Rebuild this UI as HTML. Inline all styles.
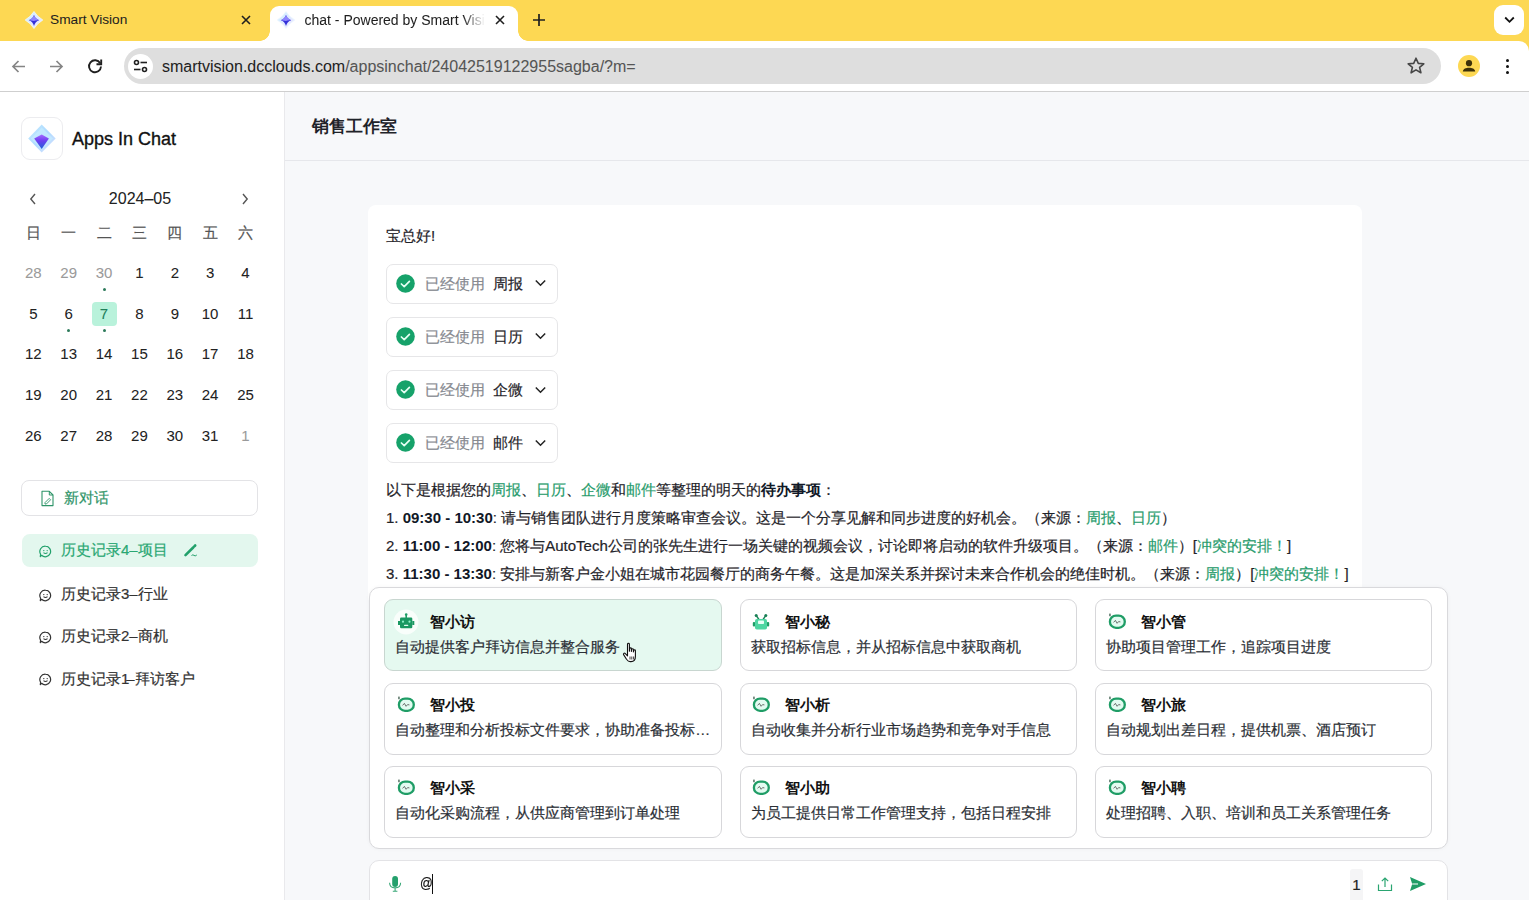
<!DOCTYPE html>
<html><head><meta charset="utf-8">
<style>
*{box-sizing:border-box;margin:0;padding:0}
html,body{width:1529px;height:900px;overflow:hidden;background:#fff;font-family:"Liberation Sans",sans-serif;color:#1f2329;-webkit-text-stroke-width:0.2px}
.abs{position:absolute}
#tabbar,#toolbar{-webkit-text-stroke-width:0.05px}
.cd{-webkit-text-stroke-width:0.05px}
b{-webkit-text-stroke-width:0}
#tabbar{position:absolute;left:0;top:0;width:1529px;height:60px;background:#FDD853}
#toolbar{position:absolute;left:0;top:41px;width:1529px;height:51px;background:#fff;border-top-right-radius:10px}
#tbline{position:absolute;left:0;top:91px;width:1529px;height:1px;background:#cfcfcf;z-index:5}
.tabtxt{position:absolute;top:12px;font-size:13.7px;color:#1f1f1f;white-space:nowrap;line-height:16px}
#sidebar{position:absolute;left:0;top:91px;width:284px;height:809px;background:#fff}
#sbline{position:absolute;left:284px;top:91px;width:1px;height:809px;background:#e9e9ec}
#main{position:absolute;left:285px;top:91px;width:1244px;height:809px;background:#F7F8FA}
</style></head><body>

<!-- ============ TAB BAR ============ -->
<div id="tabbar">
  <!-- tab 1 -->
  <svg class="abs" style="left:22.5px;top:9.5px" width="22" height="20" viewBox="0 0 22 20">
    <defs><linearGradient id="fg1" x1="0" y1="0" x2="1" y2="1"><stop offset="0" stop-color="#c8f4ff"/><stop offset="0.5" stop-color="#dfeaff"/><stop offset="1" stop-color="#efe9ff"/></linearGradient></defs>
    <path d="M11 1.5 Q14 6.5 19.8 10 Q14 13.5 11 18.5 Q8 13.5 2.2 10 Q8 6.5 11 1.5Z" stroke="#eef6ff" stroke-width="0.8" fill="url(#fg1)"/>
    <path d="M11 5 Q12.3 8.8 16.2 10.2 Q12.3 11.4 11 16 Q9.7 11.4 5.8 10.2 Q9.7 8.8 11 5Z" fill="#3431d8"/>
    <path d="M5.8 10.2 Q9.7 8.8 11 5 Q12.3 8.8 16.2 10.2 Q12.5 10 11 11Z" fill="#8f86ff"/>
  </svg>
  <div class="tabtxt" style="left:50px">Smart Vision</div>
  <svg class="abs" style="left:240px;top:14px" width="12" height="12" viewBox="0 0 12 12"><path d="M2 2L10 10M10 2L2 10" stroke="#1f1f1f" stroke-width="1.6"/></svg>

  <!-- active tab -->
  <div class="abs" style="left:270px;top:6px;width:248px;height:40px;background:#fff;border-radius:9px 9px 0 0"></div>
  <div class="abs" style="left:260px;top:31px;width:10px;height:10px;background:radial-gradient(circle at 0 0,#FDD853 9.5px,#fff 10px)"></div>
  <div class="abs" style="left:518px;top:31px;width:10px;height:10px;background:radial-gradient(circle at 100% 0,#FDD853 9.5px,#fff 10px)"></div>
  <svg class="abs" style="left:274.5px;top:9.5px" width="22" height="20" viewBox="0 0 22 20">
    <defs><linearGradient id="fg2" x1="0" y1="0" x2="1" y2="1"><stop offset="0" stop-color="#c8f4ff"/><stop offset="0.5" stop-color="#dfeaff"/><stop offset="1" stop-color="#efe9ff"/></linearGradient></defs>
    <path d="M11 1.5 Q14 6.5 19.8 10 Q14 13.5 11 18.5 Q8 13.5 2.2 10 Q8 6.5 11 1.5Z" stroke="#eef6ff" stroke-width="0.8" fill="url(#fg2)"/>
    <path d="M11 5 Q12.3 8.8 16.2 10.2 Q12.3 11.4 11 16 Q9.7 11.4 5.8 10.2 Q9.7 8.8 11 5Z" fill="#3431d8"/>
    <path d="M5.8 10.2 Q9.7 8.8 11 5 Q12.3 8.8 16.2 10.2 Q12.5 10 11 11Z" fill="#8f86ff"/>
  </svg>
  <div class="tabtxt" style="left:304.5px;width:182px;font-size:14px;overflow:hidden;-webkit-mask-image:linear-gradient(90deg,#000 158px,transparent 180px)">chat - Powered by Smart Vision</div>
  <svg class="abs" style="left:494px;top:14px" width="12" height="12" viewBox="0 0 12 12"><path d="M2 2L10 10M10 2L2 10" stroke="#1f1f1f" stroke-width="1.6"/></svg>
  <svg class="abs" style="left:532px;top:13px" width="14" height="14" viewBox="0 0 14 14"><path d="M7 1V13M1 7H13" stroke="#1f1f1f" stroke-width="1.7"/></svg>
  <!-- dropdown -->
  <div class="abs" style="left:1494px;top:5px;width:30px;height:30px;background:#fff;border-radius:9px"></div>
  <svg class="abs" style="left:1504px;top:16px" width="11" height="8" viewBox="0 0 11 8"><path d="M1.2 1.5L5.5 5.8L9.8 1.5" fill="none" stroke="#111" stroke-width="1.8"/></svg>
</div>

<!-- ============ TOOLBAR ============ -->
<div id="toolbar">
  <svg class="abs" style="left:10px;top:17px" width="17" height="17" viewBox="0 0 17 17"><path d="M15 8.5H3M8.5 3L3 8.5L8.5 14" fill="none" stroke="#858585" stroke-width="1.7"/></svg>
  <svg class="abs" style="left:48px;top:17px" width="17" height="17" viewBox="0 0 17 17"><path d="M2 8.5H14M8.5 3L14 8.5L8.5 14" fill="none" stroke="#858585" stroke-width="1.7"/></svg>
  <svg class="abs" style="left:86px;top:16px" width="18" height="18" viewBox="0 0 18 18"><path d="M14.2 6.2A6 6 0 1 0 15 9.5" fill="none" stroke="#1f1f1f" stroke-width="1.9"/><path d="M15.2 2.5V7.2H10.5" fill="none" stroke="#1f1f1f" stroke-width="1.9"/></svg>
  <div class="abs" style="left:124px;top:7px;width:1317px;height:36px;background:#DEDEDE;border-radius:18px"></div>
  <div class="abs" style="left:128px;top:12.5px;width:25px;height:25px;background:#fff;border-radius:50%"></div>
  <svg class="abs" style="left:132px;top:17px" width="17" height="16" viewBox="0 0 17 16">
    <circle cx="4.5" cy="4.5" r="2" fill="none" stroke="#1f1f1f" stroke-width="1.6"/><path d="M8.5 4.5H15" stroke="#1f1f1f" stroke-width="1.6"/>
    <circle cx="12.5" cy="11.5" r="2" fill="none" stroke="#1f1f1f" stroke-width="1.6"/><path d="M2 11.5H8.5" stroke="#1f1f1f" stroke-width="1.6"/>
  </svg>
  <div class="abs" style="left:162px;top:16px;font-size:16px;line-height:19px;white-space:nowrap;color:#1f1f1f">smartvision.dcclouds.com<span style="color:#555">/appsinchat/24042519122955sagba/?m=</span></div>
  <svg class="abs" style="left:1406px;top:15px" width="20" height="20" viewBox="0 0 20 20"><path d="M10 2.2L12.3 7.4L17.8 7.8L13.6 11.4L14.9 16.8L10 13.9L5.1 16.8L6.4 11.4L2.2 7.8L7.7 7.4Z" fill="none" stroke="#474747" stroke-width="1.6" stroke-linejoin="round"/></svg>
  <div class="abs" style="left:1458px;top:14px;width:22px;height:22px;border-radius:50%;background:#FDD853"></div>
  <svg class="abs" style="left:1458px;top:14px" width="22" height="22" viewBox="0 0 22 22"><circle cx="11" cy="8.2" r="3.1" fill="#3d3108"/><path d="M4.8 16.6C5.3 13.8 8 12.8 11 12.8S16.7 13.8 17.2 16.6Z" fill="#3d3108"/></svg>
  <div class="abs" style="left:1506px;top:17.5px;width:3px;height:3px;border-radius:50%;background:#111"></div>
  <div class="abs" style="left:1506px;top:23.5px;width:3px;height:3px;border-radius:50%;background:#111"></div>
  <div class="abs" style="left:1506px;top:29.5px;width:3px;height:3px;border-radius:50%;background:#111"></div>
</div>
<div id="tbline"></div>

<!-- ============ SIDEBAR ============ -->
<div id="sidebar">
  <!-- logo -->
  <div class="abs" style="left:21px;top:26px;width:42px;height:43px;border:1px solid #ececef;border-radius:9px;background:#fff"></div>
  <svg class="abs" style="left:27px;top:33px" width="30" height="30" viewBox="0 0 30 30">
    <defs>
      <linearGradient id="lg1" x1="0" y1="0" x2="1" y2="1"><stop offset="0" stop-color="#b9e6ff"/><stop offset="0.5" stop-color="#9fd4ff"/><stop offset="1" stop-color="#d6dcff"/></linearGradient>
      <linearGradient id="lg2" x1="0" y1="0" x2="0" y2="1"><stop offset="0" stop-color="#a66bff"/><stop offset="0.45" stop-color="#6b3df0"/><stop offset="1" stop-color="#1f63d8"/></linearGradient>
    </defs>
    <path d="M14.7 0.6L28.7 14.6L14.7 28.4L1.2 14.6Z" fill="url(#lg1)" opacity="0.85"/>
    <path d="M14.7 3.5L26 14.6L14.7 25.5L3.8 14.6Z" fill="#c8ecff" opacity="0.7"/>
    <path d="M14.7 10.4L21.9 14.4L14.7 24.9L7.2 14.4Z" fill="url(#lg2)"/>
  </svg>
  <div class="abs" style="left:72px;top:37px;font-size:18px;line-height:22px;color:#111;-webkit-text-stroke:0.35px #111;white-space:nowrap">Apps In Chat</div>

  <!-- calendar -->
  <svg class="abs" style="left:28px;top:101px" width="10" height="14" viewBox="0 0 10 14"><path d="M7 2L2.8 7L7 12" fill="none" stroke="#555" stroke-width="1.4"/></svg>
  <div class="abs" style="left:90px;top:97.5px;width:100px;text-align:center;font-size:16px;line-height:19px;color:#222;-webkit-text-stroke-width:0.05px">2024–05</div>
  <svg class="abs" style="left:240px;top:101px" width="10" height="14" viewBox="0 0 10 14"><path d="M3 2L7.2 7L3 12" fill="none" stroke="#555" stroke-width="1.4"/></svg>
  <div class="abs" style="left:15.8px;top:132px;width:35px;text-align:center;font-size:15px;line-height:20px;color:#555">日</div>
  <div class="abs" style="left:51.2px;top:132px;width:35px;text-align:center;font-size:15px;line-height:20px;color:#555">一</div>
  <div class="abs" style="left:86.5px;top:132px;width:35px;text-align:center;font-size:15px;line-height:20px;color:#555">二</div>
  <div class="abs" style="left:121.9px;top:132px;width:35px;text-align:center;font-size:15px;line-height:20px;color:#555">三</div>
  <div class="abs" style="left:157.3px;top:132px;width:35px;text-align:center;font-size:15px;line-height:20px;color:#555">四</div>
  <div class="abs" style="left:192.6px;top:132px;width:35px;text-align:center;font-size:15px;line-height:20px;color:#555">五</div>
  <div class="abs" style="left:228.0px;top:132px;width:35px;text-align:center;font-size:15px;line-height:20px;color:#555">六</div>
  <div class="abs" style="left:15.8px;top:172.0px;width:35px;text-align:center;font-size:15px;line-height:20px;color:#9a9a9a;-webkit-text-stroke-width:0.05px">28</div>
  <div class="abs" style="left:51.2px;top:172.0px;width:35px;text-align:center;font-size:15px;line-height:20px;color:#9a9a9a;-webkit-text-stroke-width:0.05px">29</div>
  <div class="abs" style="left:86.5px;top:172.0px;width:35px;text-align:center;font-size:15px;line-height:20px;color:#9a9a9a;-webkit-text-stroke-width:0.05px">30</div>
  <div class="abs" style="left:102.5px;top:197.0px;width:3px;height:3px;border-radius:50%;background:#2d7a5b"></div>
  <div class="abs" style="left:121.9px;top:172.0px;width:35px;text-align:center;font-size:15px;line-height:20px;color:#222;-webkit-text-stroke-width:0.05px">1</div>
  <div class="abs" style="left:157.3px;top:172.0px;width:35px;text-align:center;font-size:15px;line-height:20px;color:#222;-webkit-text-stroke-width:0.05px">2</div>
  <div class="abs" style="left:192.6px;top:172.0px;width:35px;text-align:center;font-size:15px;line-height:20px;color:#222;-webkit-text-stroke-width:0.05px">3</div>
  <div class="abs" style="left:228.0px;top:172.0px;width:35px;text-align:center;font-size:15px;line-height:20px;color:#222;-webkit-text-stroke-width:0.05px">4</div>
  <div class="abs" style="left:15.8px;top:212.5px;width:35px;text-align:center;font-size:15px;line-height:20px;color:#222;-webkit-text-stroke-width:0.05px">5</div>
  <div class="abs" style="left:51.2px;top:212.5px;width:35px;text-align:center;font-size:15px;line-height:20px;color:#222;-webkit-text-stroke-width:0.05px">6</div>
  <div class="abs" style="left:67.2px;top:237.5px;width:3px;height:3px;border-radius:50%;background:#2d7a5b"></div>
  <div class="abs" style="left:91.5px;top:210.5px;width:25px;height:24px;border-radius:4px;background:#B9F2DB"></div>
  <div class="abs" style="left:86.5px;top:212.5px;width:35px;text-align:center;font-size:15px;line-height:20px;color:#21805b;-webkit-text-stroke-width:0.05px">7</div>
  <div class="abs" style="left:102.5px;top:237.5px;width:3px;height:3px;border-radius:50%;background:#2d7a5b"></div>
  <div class="abs" style="left:121.9px;top:212.5px;width:35px;text-align:center;font-size:15px;line-height:20px;color:#222;-webkit-text-stroke-width:0.05px">8</div>
  <div class="abs" style="left:157.3px;top:212.5px;width:35px;text-align:center;font-size:15px;line-height:20px;color:#222;-webkit-text-stroke-width:0.05px">9</div>
  <div class="abs" style="left:192.6px;top:212.5px;width:35px;text-align:center;font-size:15px;line-height:20px;color:#222;-webkit-text-stroke-width:0.05px">10</div>
  <div class="abs" style="left:228.0px;top:212.5px;width:35px;text-align:center;font-size:15px;line-height:20px;color:#222;-webkit-text-stroke-width:0.05px">11</div>
  <div class="abs" style="left:15.8px;top:253.0px;width:35px;text-align:center;font-size:15px;line-height:20px;color:#222;-webkit-text-stroke-width:0.05px">12</div>
  <div class="abs" style="left:51.2px;top:253.0px;width:35px;text-align:center;font-size:15px;line-height:20px;color:#222;-webkit-text-stroke-width:0.05px">13</div>
  <div class="abs" style="left:86.5px;top:253.0px;width:35px;text-align:center;font-size:15px;line-height:20px;color:#222;-webkit-text-stroke-width:0.05px">14</div>
  <div class="abs" style="left:121.9px;top:253.0px;width:35px;text-align:center;font-size:15px;line-height:20px;color:#222;-webkit-text-stroke-width:0.05px">15</div>
  <div class="abs" style="left:157.3px;top:253.0px;width:35px;text-align:center;font-size:15px;line-height:20px;color:#222;-webkit-text-stroke-width:0.05px">16</div>
  <div class="abs" style="left:192.6px;top:253.0px;width:35px;text-align:center;font-size:15px;line-height:20px;color:#222;-webkit-text-stroke-width:0.05px">17</div>
  <div class="abs" style="left:228.0px;top:253.0px;width:35px;text-align:center;font-size:15px;line-height:20px;color:#222;-webkit-text-stroke-width:0.05px">18</div>
  <div class="abs" style="left:15.8px;top:294.0px;width:35px;text-align:center;font-size:15px;line-height:20px;color:#222;-webkit-text-stroke-width:0.05px">19</div>
  <div class="abs" style="left:51.2px;top:294.0px;width:35px;text-align:center;font-size:15px;line-height:20px;color:#222;-webkit-text-stroke-width:0.05px">20</div>
  <div class="abs" style="left:86.5px;top:294.0px;width:35px;text-align:center;font-size:15px;line-height:20px;color:#222;-webkit-text-stroke-width:0.05px">21</div>
  <div class="abs" style="left:121.9px;top:294.0px;width:35px;text-align:center;font-size:15px;line-height:20px;color:#222;-webkit-text-stroke-width:0.05px">22</div>
  <div class="abs" style="left:157.3px;top:294.0px;width:35px;text-align:center;font-size:15px;line-height:20px;color:#222;-webkit-text-stroke-width:0.05px">23</div>
  <div class="abs" style="left:192.6px;top:294.0px;width:35px;text-align:center;font-size:15px;line-height:20px;color:#222;-webkit-text-stroke-width:0.05px">24</div>
  <div class="abs" style="left:228.0px;top:294.0px;width:35px;text-align:center;font-size:15px;line-height:20px;color:#222;-webkit-text-stroke-width:0.05px">25</div>
  <div class="abs" style="left:15.8px;top:334.5px;width:35px;text-align:center;font-size:15px;line-height:20px;color:#222;-webkit-text-stroke-width:0.05px">26</div>
  <div class="abs" style="left:51.2px;top:334.5px;width:35px;text-align:center;font-size:15px;line-height:20px;color:#222;-webkit-text-stroke-width:0.05px">27</div>
  <div class="abs" style="left:86.5px;top:334.5px;width:35px;text-align:center;font-size:15px;line-height:20px;color:#222;-webkit-text-stroke-width:0.05px">28</div>
  <div class="abs" style="left:121.9px;top:334.5px;width:35px;text-align:center;font-size:15px;line-height:20px;color:#222;-webkit-text-stroke-width:0.05px">29</div>
  <div class="abs" style="left:157.3px;top:334.5px;width:35px;text-align:center;font-size:15px;line-height:20px;color:#222;-webkit-text-stroke-width:0.05px">30</div>
  <div class="abs" style="left:192.6px;top:334.5px;width:35px;text-align:center;font-size:15px;line-height:20px;color:#222;-webkit-text-stroke-width:0.05px">31</div>
  <div class="abs" style="left:228.0px;top:334.5px;width:35px;text-align:center;font-size:15px;line-height:20px;color:#9a9a9a;-webkit-text-stroke-width:0.05px">1</div>

  <!-- new chat -->
  <div class="abs" style="left:21px;top:389px;width:237px;height:36px;border:1px solid #e3e3e6;border-radius:8px;background:#fff"></div>
  <svg class="abs" style="left:40px;top:399px" width="15" height="17" viewBox="0 0 15 17"><path d="M2 1.3H9.3L13 5V15.6H2Z" fill="none" stroke="#2e9468" stroke-width="1.1" stroke-linejoin="round"/><path d="M9.3 1.3V5H13" fill="none" stroke="#2e9468" stroke-width="1"/><path d="M5 12.6L9.2 8.4L10.6 9.8L6.4 14H5Z" fill="none" stroke="#2e9468" stroke-width="0.9" stroke-linejoin="round"/></svg>
  <div class="abs" style="left:64px;top:398px;font-size:15px;line-height:18px;color:#2e9468">新对话</div>

  <!-- history -->
  <div class="abs" style="left:22px;top:443px;width:236px;height:33px;border-radius:8px;background:#E3F7EE"></div>
  <div class="abs" style="left:38.5px;top:452.8px;width:13px;height:13px"><svg width="13" height="13" viewBox="0 0 13 13"><path d="M6.5 1.2A5.3 5.3 0 1 1 2.6 10.3L1.3 11.6L1.6 9.2A5.3 5.3 0 0 1 6.5 1.2Z" fill="none" stroke="#22a06b" stroke-width="1.2" stroke-linejoin="round"/><circle cx="4.8" cy="5.6" r="0.7" fill="#22a06b"/><circle cx="8.2" cy="5.6" r="0.7" fill="#22a06b"/><path d="M4.5 7.6Q6.5 9.4 8.5 7.6" fill="none" stroke="#22a06b" stroke-width="1.1"/></svg></div>
  <div class="abs" style="left:61px;top:450.3px;font-size:15px;line-height:18px;color:#2aa773;white-space:nowrap">历史记录4–项目</div>
  <div class="abs" style="left:38.5px;top:496.5px;width:13px;height:13px"><svg width="13" height="13" viewBox="0 0 13 13"><path d="M6.5 1.2A5.3 5.3 0 1 1 2.6 10.3L1.3 11.6L1.6 9.2A5.3 5.3 0 0 1 6.5 1.2Z" fill="none" stroke="#333" stroke-width="1.2" stroke-linejoin="round"/><circle cx="4.8" cy="5.6" r="0.7" fill="#333"/><circle cx="8.2" cy="5.6" r="0.7" fill="#333"/><path d="M4.5 7.6Q6.5 9.4 8.5 7.6" fill="none" stroke="#333" stroke-width="1.1"/></svg></div>
  <div class="abs" style="left:61px;top:494.0px;font-size:15px;line-height:18px;color:#333;white-space:nowrap">历史记录3–行业</div>
  <div class="abs" style="left:38.5px;top:538.5px;width:13px;height:13px"><svg width="13" height="13" viewBox="0 0 13 13"><path d="M6.5 1.2A5.3 5.3 0 1 1 2.6 10.3L1.3 11.6L1.6 9.2A5.3 5.3 0 0 1 6.5 1.2Z" fill="none" stroke="#333" stroke-width="1.2" stroke-linejoin="round"/><circle cx="4.8" cy="5.6" r="0.7" fill="#333"/><circle cx="8.2" cy="5.6" r="0.7" fill="#333"/><path d="M4.5 7.6Q6.5 9.4 8.5 7.6" fill="none" stroke="#333" stroke-width="1.1"/></svg></div>
  <div class="abs" style="left:61px;top:536.0px;font-size:15px;line-height:18px;color:#333;white-space:nowrap">历史记录2–商机</div>
  <div class="abs" style="left:38.5px;top:581.2px;width:13px;height:13px"><svg width="13" height="13" viewBox="0 0 13 13"><path d="M6.5 1.2A5.3 5.3 0 1 1 2.6 10.3L1.3 11.6L1.6 9.2A5.3 5.3 0 0 1 6.5 1.2Z" fill="none" stroke="#333" stroke-width="1.2" stroke-linejoin="round"/><circle cx="4.8" cy="5.6" r="0.7" fill="#333"/><circle cx="8.2" cy="5.6" r="0.7" fill="#333"/><path d="M4.5 7.6Q6.5 9.4 8.5 7.6" fill="none" stroke="#333" stroke-width="1.1"/></svg></div>
  <div class="abs" style="left:61px;top:578.7px;font-size:15px;line-height:18px;color:#333;white-space:nowrap">历史记录<span style="letter-spacing:-3px">1</span>–拜访客户</div>
  <svg class="abs" style="left:183px;top:452px" width="15" height="15" viewBox="0 0 15 15"><path d="M2.5 12.2L10.2 4.5" stroke="#22a06b" stroke-width="2.6" stroke-linecap="round"/><path d="M11.3 3.4L12.2 2.5" stroke="#22a06b" stroke-width="2.6" stroke-linecap="round"/><path d="M8.5 12.5Q10 11.2 11 12.4T13.8 12" fill="none" stroke="#22a06b" stroke-width="1"/></svg>
</div>
<div id="sbline"></div>

<!-- ============ MAIN ============ -->
<div id="main"></div>
<div class="abs" style="left:285px;top:160px;width:1244px;height:1px;background:#e6e7eb"></div>
<div class="abs" style="left:311.5px;top:116px;font-size:16.5px;line-height:21px;font-weight:700;color:#1f2329;-webkit-text-stroke-width:0;white-space:nowrap">销售工作室</div>
<div class="abs" style="left:368px;top:205px;width:994px;height:400px;background:#fff;border-radius:8px"></div>
<div class="abs" style="left:386px;top:226px;font-size:15px;line-height:20px;color:#1f2329;white-space:nowrap">宝总好<span style="font-family:'Liberation Sans'">!</span></div>
<div class="abs" style="left:386px;top:263.5px;width:172px;height:40px;border:1px solid #e6e6e8;border-radius:7px;background:#fff"></div>
<svg class="abs" style="left:396px;top:273.5px" width="19" height="19" viewBox="0 0 19 19"><circle cx="9.5" cy="9.5" r="9.3" fill="#16a26a"/><path d="M5.4 10L8.2 12.6L13.4 7.4" fill="none" stroke="#e6fff4" stroke-width="1.7" stroke-linecap="round" stroke-linejoin="round"/></svg>
<div class="abs" style="left:425px;top:273.5px;font-size:15px;line-height:20px;color:#86898f;white-space:nowrap">已经使用</div>
<div class="abs" style="left:493px;top:273.5px;font-size:15px;line-height:20px;color:#1f2329;white-space:nowrap">周报</div>
<svg class="abs" style="left:533.5px;top:278.0px" width="13" height="10" viewBox="0 0 13 10"><path d="M1.8 2.5L6.5 7.2L11.2 2.5" fill="none" stroke="#222" stroke-width="1.5"/></svg>
<div class="abs" style="left:386px;top:316.8px;width:172px;height:40px;border:1px solid #e6e6e8;border-radius:7px;background:#fff"></div>
<svg class="abs" style="left:396px;top:326.8px" width="19" height="19" viewBox="0 0 19 19"><circle cx="9.5" cy="9.5" r="9.3" fill="#16a26a"/><path d="M5.4 10L8.2 12.6L13.4 7.4" fill="none" stroke="#e6fff4" stroke-width="1.7" stroke-linecap="round" stroke-linejoin="round"/></svg>
<div class="abs" style="left:425px;top:326.8px;font-size:15px;line-height:20px;color:#86898f;white-space:nowrap">已经使用</div>
<div class="abs" style="left:493px;top:326.8px;font-size:15px;line-height:20px;color:#1f2329;white-space:nowrap">日历</div>
<svg class="abs" style="left:533.5px;top:331.3px" width="13" height="10" viewBox="0 0 13 10"><path d="M1.8 2.5L6.5 7.2L11.2 2.5" fill="none" stroke="#222" stroke-width="1.5"/></svg>
<div class="abs" style="left:386px;top:370.1px;width:172px;height:40px;border:1px solid #e6e6e8;border-radius:7px;background:#fff"></div>
<svg class="abs" style="left:396px;top:380.1px" width="19" height="19" viewBox="0 0 19 19"><circle cx="9.5" cy="9.5" r="9.3" fill="#16a26a"/><path d="M5.4 10L8.2 12.6L13.4 7.4" fill="none" stroke="#e6fff4" stroke-width="1.7" stroke-linecap="round" stroke-linejoin="round"/></svg>
<div class="abs" style="left:425px;top:380.1px;font-size:15px;line-height:20px;color:#86898f;white-space:nowrap">已经使用</div>
<div class="abs" style="left:493px;top:380.1px;font-size:15px;line-height:20px;color:#1f2329;white-space:nowrap">企微</div>
<svg class="abs" style="left:533.5px;top:384.6px" width="13" height="10" viewBox="0 0 13 10"><path d="M1.8 2.5L6.5 7.2L11.2 2.5" fill="none" stroke="#222" stroke-width="1.5"/></svg>
<div class="abs" style="left:386px;top:423.4px;width:172px;height:40px;border:1px solid #e6e6e8;border-radius:7px;background:#fff"></div>
<svg class="abs" style="left:396px;top:433.4px" width="19" height="19" viewBox="0 0 19 19"><circle cx="9.5" cy="9.5" r="9.3" fill="#16a26a"/><path d="M5.4 10L8.2 12.6L13.4 7.4" fill="none" stroke="#e6fff4" stroke-width="1.7" stroke-linecap="round" stroke-linejoin="round"/></svg>
<div class="abs" style="left:425px;top:433.4px;font-size:15px;line-height:20px;color:#86898f;white-space:nowrap">已经使用</div>
<div class="abs" style="left:493px;top:433.4px;font-size:15px;line-height:20px;color:#1f2329;white-space:nowrap">邮件</div>
<svg class="abs" style="left:533.5px;top:437.9px" width="13" height="10" viewBox="0 0 13 10"><path d="M1.8 2.5L6.5 7.2L11.2 2.5" fill="none" stroke="#222" stroke-width="1.5"/></svg>
<div class="abs" style="left:386px;top:476px;font-size:15px;line-height:28px;color:#1f2329;white-space:nowrap">以下是根据您的<span style="color:#289c6c">周报</span>、<span style="color:#289c6c">日历</span>、<span style="color:#289c6c">企微</span>和<span style="color:#289c6c">邮件</span>等整理的明天的<b style="color:#111827">待办事项</b>：</div>
<div class="abs" style="left:386px;top:504px;font-size:15px;line-height:28px;color:#1f2329;white-space:nowrap">1. <b style="color:#111827">09:30 - 10:30</b>: 请与销售团队进行月度策略审查会议。这是一个分享见解和同步进度的好机会。（来源：<span style="color:#289c6c">周报</span>、<span style="color:#289c6c">日历</span>）</div>
<div class="abs" style="left:386px;top:532px;font-size:15px;line-height:28px;color:#1f2329;white-space:nowrap">2. <b style="color:#111827">11:00 - 12:00</b>: 您将与AutoTech公司的张先生进行一场关键的视频会议，讨论即将启动的软件升级项目。（来源：<span style="color:#289c6c">邮件</span>）[<span style="color:#289c6c">冲突的安排！</span>]</div>
<div class="abs" style="left:386px;top:560px;font-size:15px;line-height:28px;color:#1f2329;white-space:nowrap">3. <b style="color:#111827">11:30 - 13:30</b>: 安排与新客户金小姐在城市花园餐厅的商务午餐。这是加深关系并探讨未来合作机会的绝佳时机。（来源：<span style="color:#289c6c">周报</span>）[<span style="color:#289c6c">冲突的安排！</span>]</div>
<div class="abs" style="left:369px;top:587px;width:1079px;height:262px;background:#fff;border:1px solid #d9d9dc;border-radius:10px;box-shadow:0 0 4px rgba(0,0,0,0.04)"></div>
<div class="abs" style="left:384.3px;top:599.3px;width:337.4px;height:72px;background:#E5F9F0;border:1px solid #c8d6d0;border-radius:9px"></div>
<div class="abs" style="left:393.0px;top:608.6px;width:26px;height:26px"><svg width="26" height="26" viewBox="0 0 26 26"><circle cx="13" cy="13" r="12.5" fill="#fff" opacity="0.75"/><rect x="7" y="8.5" width="12.3" height="10.8" rx="1.2" fill="#1a9862"/><rect x="5" y="12" width="2" height="4" fill="#1a9862"/><rect x="19.3" y="12" width="2" height="4" fill="#1a9862"/><rect x="12.4" y="6" width="1.6" height="3" fill="#1f9d66"/><circle cx="13.2" cy="5.5" r="1.3" fill="#1f9d66"/><circle cx="10" cy="12.7" r="1.1" fill="#8ff0c8"/><circle cx="16.5" cy="12.7" r="1.1" fill="#8ff0c8"/><rect x="11" y="15.8" width="4.3" height="1.3" rx="0.6" fill="#dffbef"/></svg></div>
<div class="abs" style="left:429.8px;top:611.8px;font-size:15px;line-height:20px;font-weight:700;color:#111;-webkit-text-stroke-width:0;white-space:nowrap">智小访</div>
<div class="abs" style="left:395.3px;top:636.8px;font-size:15px;line-height:20px;color:#2b2f36;white-space:nowrap">自动提供客户拜访信息并整合服务</div>
<div class="abs" style="left:739.7px;top:599.3px;width:337.4px;height:72px;background:#fff;border:1px solid #d7d7da;border-radius:9px"></div>
<div class="abs" style="left:748.4px;top:608.6px;width:26px;height:26px"><svg width="26" height="26" viewBox="0 0 26 26"><path d="M8.5 7L11 10.5M17.5 7L15 10.5" stroke="#1a7f55" stroke-width="1.3"/><circle cx="8.2" cy="6.5" r="1.5" fill="#1a7f55"/><circle cx="17.8" cy="6.5" r="1.5" fill="#1a7f55"/><rect x="4.8" y="13" width="2.4" height="4.5" rx="1" fill="#1f9d66"/><rect x="18.8" y="13" width="2.4" height="4.5" rx="1" fill="#1f9d66"/><rect x="7" y="10" width="12" height="10.5" rx="1.8" fill="#4fd6a2"/><rect x="10" y="11.5" width="6" height="3.5" rx="0.8" fill="#e8fff6"/></svg></div>
<div class="abs" style="left:785.2px;top:611.8px;font-size:15px;line-height:20px;font-weight:700;color:#111;-webkit-text-stroke-width:0;white-space:nowrap">智小秘</div>
<div class="abs" style="left:750.7px;top:636.8px;font-size:15px;line-height:20px;color:#2b2f36;white-space:nowrap">获取招标信息，并从招标信息中获取商机</div>
<div class="abs" style="left:1095.1px;top:599.3px;width:337.4px;height:72px;background:#fff;border:1px solid #d7d7da;border-radius:9px"></div>
<div class="abs" style="left:1103.8px;top:608.6px;width:26px;height:26px"><svg width="26" height="26" viewBox="0 0 26 26"><rect x="5.9" y="6.6" width="14.9" height="12.2" rx="6.1" fill="#e3fbf1" stroke="#1f9d66" stroke-width="2.3"/><rect x="5.3" y="4.6" width="1.3" height="2.6" fill="#3a5a4a"/><path d="M9.6 13.4L11.4 11.4L13.1 14.3L14.6 12.6L16.4 12.9" fill="none" stroke="#444" stroke-width="0.75"/></svg></div>
<div class="abs" style="left:1140.6px;top:611.8px;font-size:15px;line-height:20px;font-weight:700;color:#111;-webkit-text-stroke-width:0;white-space:nowrap">智小管</div>
<div class="abs" style="left:1106.1px;top:636.8px;font-size:15px;line-height:20px;color:#2b2f36;white-space:nowrap">协助项目管理工作，追踪项目进度</div>
<div class="abs" style="left:384.3px;top:682.5px;width:337.4px;height:72px;background:#fff;border:1px solid #d7d7da;border-radius:9px"></div>
<div class="abs" style="left:393.0px;top:691.8px;width:26px;height:26px"><svg width="26" height="26" viewBox="0 0 26 26"><rect x="5.9" y="6.6" width="14.9" height="12.2" rx="6.1" fill="#e3fbf1" stroke="#1f9d66" stroke-width="2.3"/><rect x="5.3" y="4.6" width="1.3" height="2.6" fill="#3a5a4a"/><path d="M9.6 13.4L11.4 11.4L13.1 14.3L14.6 12.6L16.4 12.9" fill="none" stroke="#444" stroke-width="0.75"/></svg></div>
<div class="abs" style="left:429.8px;top:695.0px;font-size:15px;line-height:20px;font-weight:700;color:#111;-webkit-text-stroke-width:0;white-space:nowrap">智小投</div>
<div class="abs" style="left:395.3px;top:720.0px;font-size:15px;line-height:20px;color:#2b2f36;white-space:nowrap">自动整理和分析投标文件要求，协助准备投标…</div>
<div class="abs" style="left:739.7px;top:682.5px;width:337.4px;height:72px;background:#fff;border:1px solid #d7d7da;border-radius:9px"></div>
<div class="abs" style="left:748.4px;top:691.8px;width:26px;height:26px"><svg width="26" height="26" viewBox="0 0 26 26"><rect x="5.9" y="6.6" width="14.9" height="12.2" rx="6.1" fill="#e3fbf1" stroke="#1f9d66" stroke-width="2.3"/><rect x="5.3" y="4.6" width="1.3" height="2.6" fill="#3a5a4a"/><path d="M9.6 13.4L11.4 11.4L13.1 14.3L14.6 12.6L16.4 12.9" fill="none" stroke="#444" stroke-width="0.75"/></svg></div>
<div class="abs" style="left:785.2px;top:695.0px;font-size:15px;line-height:20px;font-weight:700;color:#111;-webkit-text-stroke-width:0;white-space:nowrap">智小析</div>
<div class="abs" style="left:750.7px;top:720.0px;font-size:15px;line-height:20px;color:#2b2f36;white-space:nowrap">自动收集并分析行业市场趋势和竞争对手信息</div>
<div class="abs" style="left:1095.1px;top:682.5px;width:337.4px;height:72px;background:#fff;border:1px solid #d7d7da;border-radius:9px"></div>
<div class="abs" style="left:1103.8px;top:691.8px;width:26px;height:26px"><svg width="26" height="26" viewBox="0 0 26 26"><rect x="5.9" y="6.6" width="14.9" height="12.2" rx="6.1" fill="#e3fbf1" stroke="#1f9d66" stroke-width="2.3"/><rect x="5.3" y="4.6" width="1.3" height="2.6" fill="#3a5a4a"/><path d="M9.6 13.4L11.4 11.4L13.1 14.3L14.6 12.6L16.4 12.9" fill="none" stroke="#444" stroke-width="0.75"/></svg></div>
<div class="abs" style="left:1140.6px;top:695.0px;font-size:15px;line-height:20px;font-weight:700;color:#111;-webkit-text-stroke-width:0;white-space:nowrap">智小旅</div>
<div class="abs" style="left:1106.1px;top:720.0px;font-size:15px;line-height:20px;color:#2b2f36;white-space:nowrap">自动规划出差日程，提供机票、酒店预订</div>
<div class="abs" style="left:384.3px;top:765.7px;width:337.4px;height:72px;background:#fff;border:1px solid #d7d7da;border-radius:9px"></div>
<div class="abs" style="left:393.0px;top:775.0px;width:26px;height:26px"><svg width="26" height="26" viewBox="0 0 26 26"><rect x="5.9" y="6.6" width="14.9" height="12.2" rx="6.1" fill="#e3fbf1" stroke="#1f9d66" stroke-width="2.3"/><rect x="5.3" y="4.6" width="1.3" height="2.6" fill="#3a5a4a"/><path d="M9.6 13.4L11.4 11.4L13.1 14.3L14.6 12.6L16.4 12.9" fill="none" stroke="#444" stroke-width="0.75"/></svg></div>
<div class="abs" style="left:429.8px;top:778.2px;font-size:15px;line-height:20px;font-weight:700;color:#111;-webkit-text-stroke-width:0;white-space:nowrap">智小采</div>
<div class="abs" style="left:395.3px;top:803.2px;font-size:15px;line-height:20px;color:#2b2f36;white-space:nowrap">自动化采购流程，从供应商管理到订单处理</div>
<div class="abs" style="left:739.7px;top:765.7px;width:337.4px;height:72px;background:#fff;border:1px solid #d7d7da;border-radius:9px"></div>
<div class="abs" style="left:748.4px;top:775.0px;width:26px;height:26px"><svg width="26" height="26" viewBox="0 0 26 26"><rect x="5.9" y="6.6" width="14.9" height="12.2" rx="6.1" fill="#e3fbf1" stroke="#1f9d66" stroke-width="2.3"/><rect x="5.3" y="4.6" width="1.3" height="2.6" fill="#3a5a4a"/><path d="M9.6 13.4L11.4 11.4L13.1 14.3L14.6 12.6L16.4 12.9" fill="none" stroke="#444" stroke-width="0.75"/></svg></div>
<div class="abs" style="left:785.2px;top:778.2px;font-size:15px;line-height:20px;font-weight:700;color:#111;-webkit-text-stroke-width:0;white-space:nowrap">智小助</div>
<div class="abs" style="left:750.7px;top:803.2px;font-size:15px;line-height:20px;color:#2b2f36;white-space:nowrap">为员工提供日常工作管理支持，包括日程安排</div>
<div class="abs" style="left:1095.1px;top:765.7px;width:337.4px;height:72px;background:#fff;border:1px solid #d7d7da;border-radius:9px"></div>
<div class="abs" style="left:1103.8px;top:775.0px;width:26px;height:26px"><svg width="26" height="26" viewBox="0 0 26 26"><rect x="5.9" y="6.6" width="14.9" height="12.2" rx="6.1" fill="#e3fbf1" stroke="#1f9d66" stroke-width="2.3"/><rect x="5.3" y="4.6" width="1.3" height="2.6" fill="#3a5a4a"/><path d="M9.6 13.4L11.4 11.4L13.1 14.3L14.6 12.6L16.4 12.9" fill="none" stroke="#444" stroke-width="0.75"/></svg></div>
<div class="abs" style="left:1140.6px;top:778.2px;font-size:15px;line-height:20px;font-weight:700;color:#111;-webkit-text-stroke-width:0;white-space:nowrap">智小聘</div>
<div class="abs" style="left:1106.1px;top:803.2px;font-size:15px;line-height:20px;color:#2b2f36;white-space:nowrap">处理招聘、入职、培训和员工关系管理任务</div>
<svg class="abs" style="left:622px;top:642px" width="20" height="22" viewBox="0 0 20 22"><path d="M5.5 2.2C5.5 1 7.4 1 7.4 2.2V9.2L7.6 6.8C7.6 5.6 9.4 5.6 9.4 6.8V9.5L9.6 7.6C9.6 6.5 11.4 6.5 11.4 7.6V10L11.7 8.6C11.7 7.6 13.4 7.6 13.4 8.6V14.5C13.4 17.5 11.8 19.6 9 19.6H8.3C6.5 19.6 5.5 18.6 4.5 17.2L1.6 12.6C1 11.6 2.3 10.6 3.1 11.4L5.5 13.8Z" fill="#fff" stroke="#111" stroke-width="1.1" stroke-linejoin="round"/><path d="M8 14.5V17.5M9.8 14.5V17.5M11.6 14.5V17.5" stroke="#111" stroke-width="0.8"/></svg>
<div class="abs" style="left:369px;top:860px;width:1079px;height:60px;background:#fff;border:1px solid #e3e3e6;border-radius:10px"></div>
<svg class="abs" style="left:387px;top:873px" width="16" height="20" viewBox="0 0 16 20"><rect x="5.2" y="3" width="5.8" height="11" rx="2.9" fill="#24a06c"/><path d="M2.6 9.8C2.6 13 5 14.9 8.1 14.9S13.6 13 13.6 9.8M8.1 14.9V17.8M5.8 18.3H10.4" fill="none" stroke="#3aa878" stroke-width="1.1"/></svg>
<div class="abs" style="left:420px;top:872.5px;font-size:14px;line-height:20px;color:#111;transform:scaleX(0.9);transform-origin:0 0">@</div>
<div class="abs" style="left:432px;top:874px;width:1.3px;height:20px;background:#111"></div>
<div class="abs" style="left:1350px;top:869px;width:13px;height:40px;background:#f5f5f6;border-radius:3px"></div>
<div class="abs" style="left:1351px;top:875px;width:11px;text-align:center;font-size:15px;line-height:20px;color:#222">1</div>
<svg class="abs" style="left:1377px;top:876px" width="16" height="16" viewBox="0 0 16 16"><path d="M1.5 8.5V14.5H14.5V8.5" fill="none" stroke="#2aa571" stroke-width="1.2"/><path d="M8 11V2M4.8 5.2L8 2L11.2 5.2" fill="none" stroke="#2aa571" stroke-width="1.2"/></svg>
<svg class="abs" style="left:1409px;top:876px" width="18" height="16" viewBox="0 0 18 16"><path d="M1 1L17 8L1 15L3.2 8Z" fill="#1f9d66"/><path d="M3.2 8H9" stroke="#fff" stroke-width="1"/></svg>

</body></html>
